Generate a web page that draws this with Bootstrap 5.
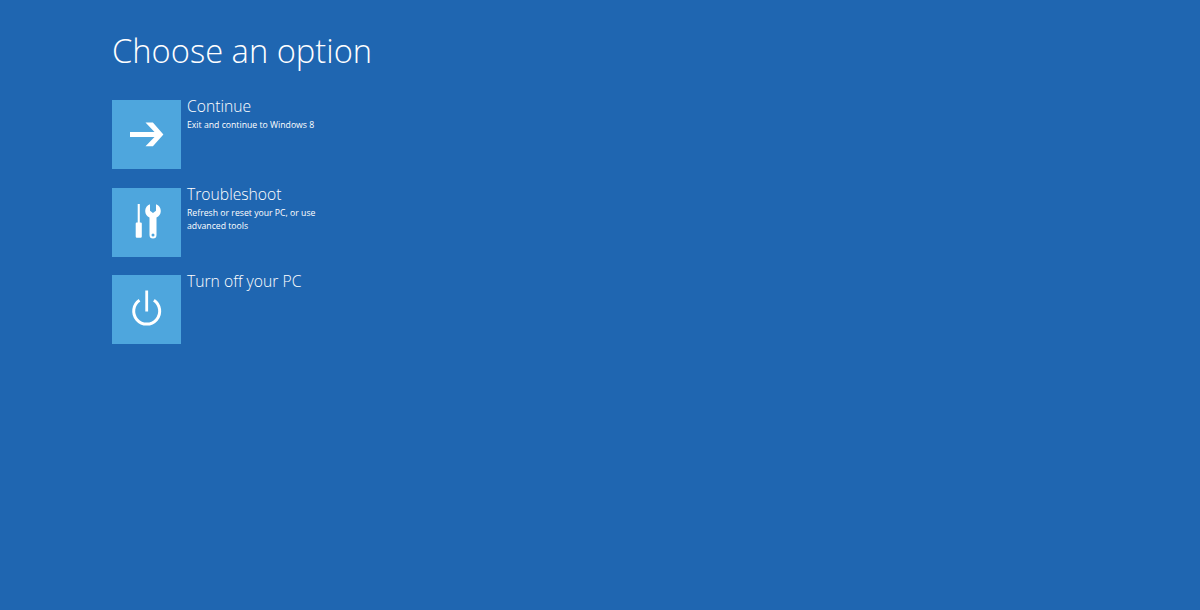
<!doctype html>
<html lang="en">
<head>
<meta charset="utf-8">
<title>Choose an option</title>
<link href="https://cdn.jsdelivr.net/npm/bootstrap@5.3.0/dist/css/bootstrap.min.css" rel="stylesheet">
<style>
html,body{height:100%}
body{background:#1f66b1;color:#fff;font-family:"Open Sans","Noto Sans",sans-serif;overflow:hidden}
.screen{padding:28px 0 0 112px}
.title-text{font-size:32.7px;font-weight:300;line-height:46px;margin:0 0 26px;color:#fff}
.opt{height:69px;margin-bottom:18.5px;width:240px;color:#fff;text-decoration:none}
.tile{width:69px;height:69px;background:#4ea6dd;flex:none}
.tile svg{display:block}
.opt-body{padding-left:6px}
.opt-name{font-size:15.7px;font-weight:300;line-height:22px;margin:-5px 0 0;white-space:nowrap}
.opt-desc{font-size:8.7px;line-height:13px;margin:2px 0 0;width:135px}
</style>
</head>
<body>
<div class="screen">
<h1 class="title-text">Choose an option</h1>
<a class="opt d-flex" href="#">
  <div class="tile"><svg width="69" height="69" viewBox="0 0 69 69" aria-hidden="true"><path d="M18 31.9h24.500l-9-9.400h7.400l10.500 11.900-10.500 11.900h-7.400l9-9.400H18z" fill="#fff"/></svg></div>
  <div class="opt-body"><p class="opt-name">Continue</p><p class="opt-desc">Exit and continue to Windows 8</p></div>
</a>
<a class="opt d-flex" href="#">
  <div class="tile"><svg width="69" height="69" viewBox="0 0 69 69" aria-hidden="true"><path fill="#fff" d="M25.700 16h2.100v18.500h1a1 1 0 0 1 1 1v13a1.200 1.200 0 0 1-1.200 1.200h-3.700a1.200 1.200 0 0 1-1.200-1.200v-13a1 1 0 0 1 1-1h1z"/><path fill="#fff" fill-rule="evenodd" d="M38 16.300v6.400l3 2.200 3-2.200v-6.400c2.900 1 4.800 3.700 4.800 6.700 0 3-1.800 5.500-4.300 6.600V47a3.500 3.500 0 0 1-7 0V29.600c-2.500-1.100-4.300-3.600-4.300-6.600 0-3 1.900-5.700 4.800-6.700zM41 45.500a1.500 1.500 0 1 0 0 3 1.500 1.500 0 0 0 0-3z"/></svg></div>
  <div class="opt-body"><p class="opt-name">Troubleshoot</p><p class="opt-desc">Refresh or reset your PC, or use advanced tools</p></div>
</a>
<a class="opt d-flex" href="#">
  <div class="tile"><svg width="69" height="69" viewBox="0 0 69 69" aria-hidden="true"><path d="M27.500 25.300a13 13 0 1 0 14.400 0" fill="none" stroke="#fff" stroke-width="3"/><rect x="33.300" y="15.500" width="2.800" height="21" fill="#fff"/></svg></div>
  <div class="opt-body"><p class="opt-name">Turn off your PC</p></div>
</a>
</div>
<script src="https://cdn.jsdelivr.net/npm/bootstrap@5.3.0/dist/js/bootstrap.bundle.min.js"></script>
</body>
</html>
